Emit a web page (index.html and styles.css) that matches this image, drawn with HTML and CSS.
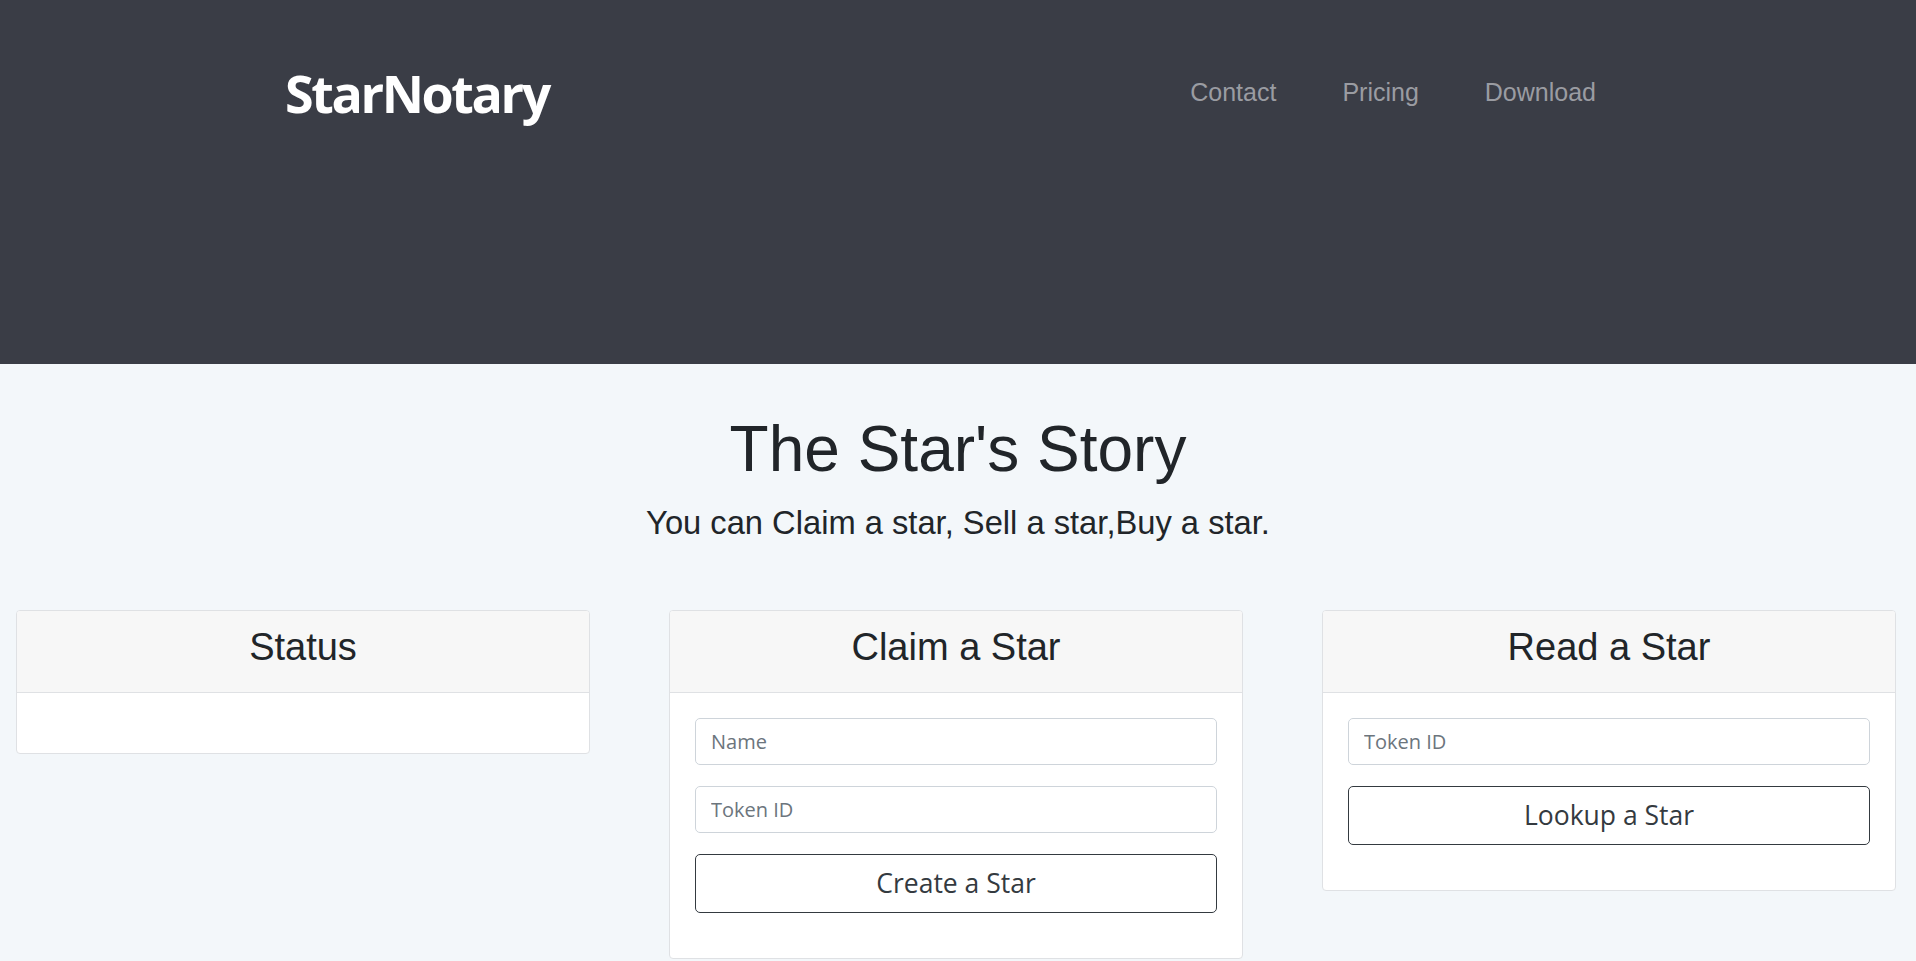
FILE: index.html
```
<!DOCTYPE html>
<html lang="en">
<head>
<meta charset="utf-8">
<title>StarNotary</title>
<link rel="stylesheet" href="styles.css">
</head>
<body>
<header class="masthead">
  <div class="brand">StarNotary</div>
  <nav class="nav">
    <a class="nav-link" href="#">Contact</a>
    <a class="nav-link" href="#">Pricing</a>
    <a class="nav-link" href="#">Download</a>
  </nav>
</header>
<main class="main">
  <h1 class="title">The Star's Story</h1>
  <p class="lead">You can Claim a star, Sell a star,Buy a star.</p>
  <section class="cards">
    <div class="card">
      <div class="card-header"><h2 class="card-title">Status</h2></div>
      <div class="card-body status-body"></div>
    </div>
    <div class="card">
      <div class="card-header"><h2 class="card-title">Claim a Star</h2></div>
      <div class="card-body">
        <input class="field" type="text" placeholder="Name">
        <input class="field" type="text" placeholder="Token ID">
        <button class="btn" type="button">Create a Star</button>
      </div>
    </div>
    <div class="card">
      <div class="card-header"><h2 class="card-title">Read a Star</h2></div>
      <div class="card-body">
        <input class="field" type="text" placeholder="Token ID">
        <button class="btn" type="button">Lookup a Star</button>
      </div>
    </div>
  </section>
</main>
</body>
</html>
```
FILE: styles.css
```
* { box-sizing: border-box; }
html, body { margin: 0; padding: 0; }
body {
  background: #f3f7fa;
  font-family: "Liberation Sans", Arial, sans-serif;
  color: #212529;
  height: 961px;
  overflow: hidden;
}
.masthead {
  background: #3a3d46;
  height: 364px;
  display: flex;
  align-items: flex-start;
  justify-content: space-between;
  padding: 67px 318px 0 285px;
}
.brand {
  font-family: "Open Sans", sans-serif;
  font-weight: 700;
  font-size: 52px;
  line-height: 52px;
  color: #ffffff;
  letter-spacing: -2.4px;
}
.nav {
  display: flex;
  gap: 66px;
  margin-top: 13px;
  margin-right: 2px;
}
.nav-link {
  font-family: "Liberation Sans", Arial, sans-serif;
  font-size: 25px;
  line-height: 25px;
  color: #9a9ca2;
  text-decoration: none;
}
.main {
  text-align: center;
}
.title {
  margin: 47px 0 0;
  font-size: 64px;
  line-height: 1.2;
  font-weight: 400;
  color: #212529;
}
.lead {
  margin: 15px 0 0;
  font-size: 32.7px;
  line-height: 1.2;
  color: #212529;
}
.cards {
  display: grid;
  grid-template-columns: repeat(3, 574px);
  column-gap: 79px;
  align-items: start;
  padding: 0 0 0 16px;
  margin-top: 68px;
}
.card {
  background: #ffffff;
  border: 1px solid #dfe1e4;
  border-radius: 4px;
  overflow: hidden;
}
.card-header {
  background: #f7f7f7;
  border-bottom: 1px solid #dfe1e4;
  height: 82px;
  padding-top: 14px;
}
.card-title {
  margin: 0;
  font-size: 38px;
  line-height: 1.2;
  font-weight: 400;
  color: #212529;
}
.card-body {
  padding: 25px 25px 45px;
  display: flex;
  flex-direction: column;
  gap: 21px;
}
.status-body {
  height: 60px;
  padding: 0;
}
.field {
  height: 47px;
  border: 1px solid #ced4da;
  border-radius: 5px;
  padding: 0 15px;
  font-family: "Open Sans", sans-serif;
  font-size: 20px;
  color: #495057;
  background: #fff;
}
.field::placeholder { color: #6c757d; }
.btn {
  height: 59px;
  border: 1px solid #343a40;
  border-radius: 5px;
  background: #fff;
  font-family: "Open Sans", sans-serif;
  font-size: 26.5px;
  color: #343a40;
  padding-bottom: 2px;
}
```
